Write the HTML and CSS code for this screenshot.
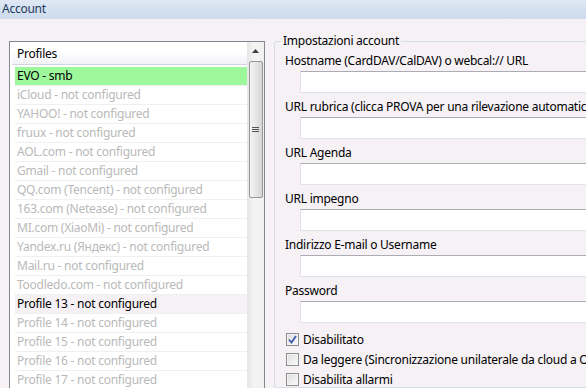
FILE: index.html
```html
<!DOCTYPE html>
<html>
<head>
<meta charset="utf-8">
<link rel="stylesheet" href="styles.css">
</head>
<body>
<div class="titlebar">Account</div>
<div class="main">
  <div class="listbox">
    <div class="listcontent">
      <div class="header">Profiles</div>
      <div class="row sel">EVO - smb</div>
      <div class="row off">iCloud - not configured</div>
      <div class="row off">YAHOO! - not configured</div>
      <div class="row off">fruux - not configured</div>
      <div class="row off">AOL.com - not configured</div>
      <div class="row off">Gmail - not configured</div>
      <div class="row off">QQ.com (Tencent) - not configured</div>
      <div class="row off">163.com (Netease) - not configured</div>
      <div class="row off">MI.com (XiaoMi) - not configured</div>
      <div class="row off">Yandex.ru (Яндекс) - not configured</div>
      <div class="row off">Mail.ru - not configured</div>
      <div class="row off">Toodledo.com - not configured</div>
      <div class="row hover">Profile 13 - not configured</div>
      <div class="row off">Profile 14 - not configured</div>
      <div class="row off">Profile 15 - not configured</div>
      <div class="row off">Profile 16 - not configured</div>
      <div class="row off">Profile 17 - not configured</div>
    </div>
    <div class="scrollbar">
      <div class="arrow"><svg width="7" height="4" viewBox="0 0 7 4"><path d="M0 4 L3.5 0 L7 4 Z" fill="#3c3c3c"/></svg></div>
      <div class="thumb"><div class="grip"></div></div>
    </div>
  </div>
  <fieldset class="group">
    <legend>Impostazioni account</legend>
    <div class="field"><div class="label">Hostname (CardDAV/CalDAV) o webcal:// URL</div><div class="input"></div></div>
    <div class="field"><div class="label">URL rubrica (clicca PROVA per una rilevazione automatica)</div><div class="input"></div></div>
    <div class="field"><div class="label">URL Agenda</div><div class="input"></div></div>
    <div class="field"><div class="label">URL impegno</div><div class="input"></div></div>
    <div class="field"><div class="label">Indirizzo E-mail o Username</div><div class="input"></div></div>
    <div class="field"><div class="label">Password</div><div class="input"></div></div>
    <div class="checks">
      <div class="check"><span class="box checked"><svg width="9" height="9" viewBox="0 0 9 9"><path d="M1 4.5 L3.5 7.5 L8 1" fill="none" stroke="#3b5aa8" stroke-width="1.8"/></svg></span>Disabilitato</div>
      <div class="check"><span class="box"></span>Da leggere (Sincronizzazione unilaterale da cloud a Outlook)</div>
      <div class="check"><span class="box"></span>Disabilita allarmi</div>
    </div>
  </fieldset>
</div>
</body>
</html>
```

FILE: styles.css
```css
html, body {
  margin: 0;
  padding: 0;
  width: 586px;
  height: 388px;
  overflow: hidden;
  background: #f5f1f5;
  font-family: "Noto Sans", "DejaVu Sans", sans-serif;
  font-size: 12px;
  letter-spacing: -0.25px;
  color: #000;
}

.titlebar {
  height: 19px;
  line-height: 18px;
  padding-left: 2px;
  background: linear-gradient(#dfe8f4, #ccdbed);
  color: #1e395b;
  white-space: nowrap;
}

.main {
  display: flex;
  align-items: flex-start;
  gap: 9px;
  padding: 22px 0 0 9px;
}

.listbox {
  flex: none;
  width: 254px;
  height: 400px;
  border: 1px solid #828790;
  background: #fff;
  display: flex;
}

.listcontent {
  flex: 1;
  padding: 1px 0 0 5px;
  min-width: 0;
}

.header {
  height: 22px;
  line-height: 21px;
  margin-left: -3px;
  padding-left: 5px;
  background: linear-gradient(#ffffff 40%, #f2f2f7);
  border-bottom: 1px solid #d5d5df;
  margin-bottom: 2px;
  box-sizing: border-box;
}

.row {
  height: 19px;
  line-height: 18px;
  padding-left: 2px;
  border-bottom: 1px solid #f0f0f0;
  box-sizing: border-box;
  white-space: nowrap;
}

.row.sel { background: #9cf89b; }
.row.off { color: #b9b9b9; }
.row.hover { background: #f5f1f5; }

.scrollbar {
  flex: none;
  width: 17px;
  background: linear-gradient(90deg, #e6e6e6, #f4f4f4 40%, #f0f0f0);
  display: flex;
  flex-direction: column;
  align-items: center;
}

.arrow {
  height: 18px;
  width: 17px;
  display: flex;
  align-items: center;
  justify-content: center;
}

.thumb {
  width: 14px;
  height: 137px;
  margin-top: 1px;
  border: 1px solid #979797;
  border-radius: 2px;
  box-sizing: border-box;
  background: linear-gradient(90deg, #f3f3f3, #e6e6e6 50%, #d6d6d6);
  display: flex;
  align-items: center;
  justify-content: center;
}

.grip {
  width: 7px;
  height: 5px;
  background: repeating-linear-gradient(#555 0 1px, transparent 1px 2px);
}

.group {
  flex: 1;
  margin: -8px 0 0 0;
  padding: 0 0 0 6px;
  border: 1px solid #d5dfe5;
  border-right: none;
  border-radius: 3px 0 0 3px;
  min-width: 0;
  white-space: nowrap;
}

.group legend {
  padding: 0 2px;
  line-height: 16px;
}

.field {
  padding-left: 4px;
  margin-top: 4px;
}

.field + .field { margin-top: 6px; }

.label {
  height: 16px;
  line-height: 16px;
  margin-bottom: 2px;
}

.input {
  margin-left: 15px;
  height: 22px;
  box-sizing: border-box;
  background: #fff;
  border: 1px solid #e2e3ea;
  border-top-color: #abadb3;
  border-right: none;
}

.checks {
  margin-top: 8px;
  padding-left: 5px;
  display: flex;
  flex-direction: column;
  gap: 4px;
}

.check {
  display: flex;
  align-items: center;
  gap: 4px;
  height: 16px;
}

.box {
  flex: none;
  width: 13px;
  height: 13px;
  box-sizing: border-box;
  border: 1px solid #8e8f8f;
  background: linear-gradient(135deg, #dcdcdc, #fbfbfb);
  box-shadow: inset 0 0 0 1px #f4f4f4;
  display: flex;
  align-items: center;
  justify-content: center;
}
```
